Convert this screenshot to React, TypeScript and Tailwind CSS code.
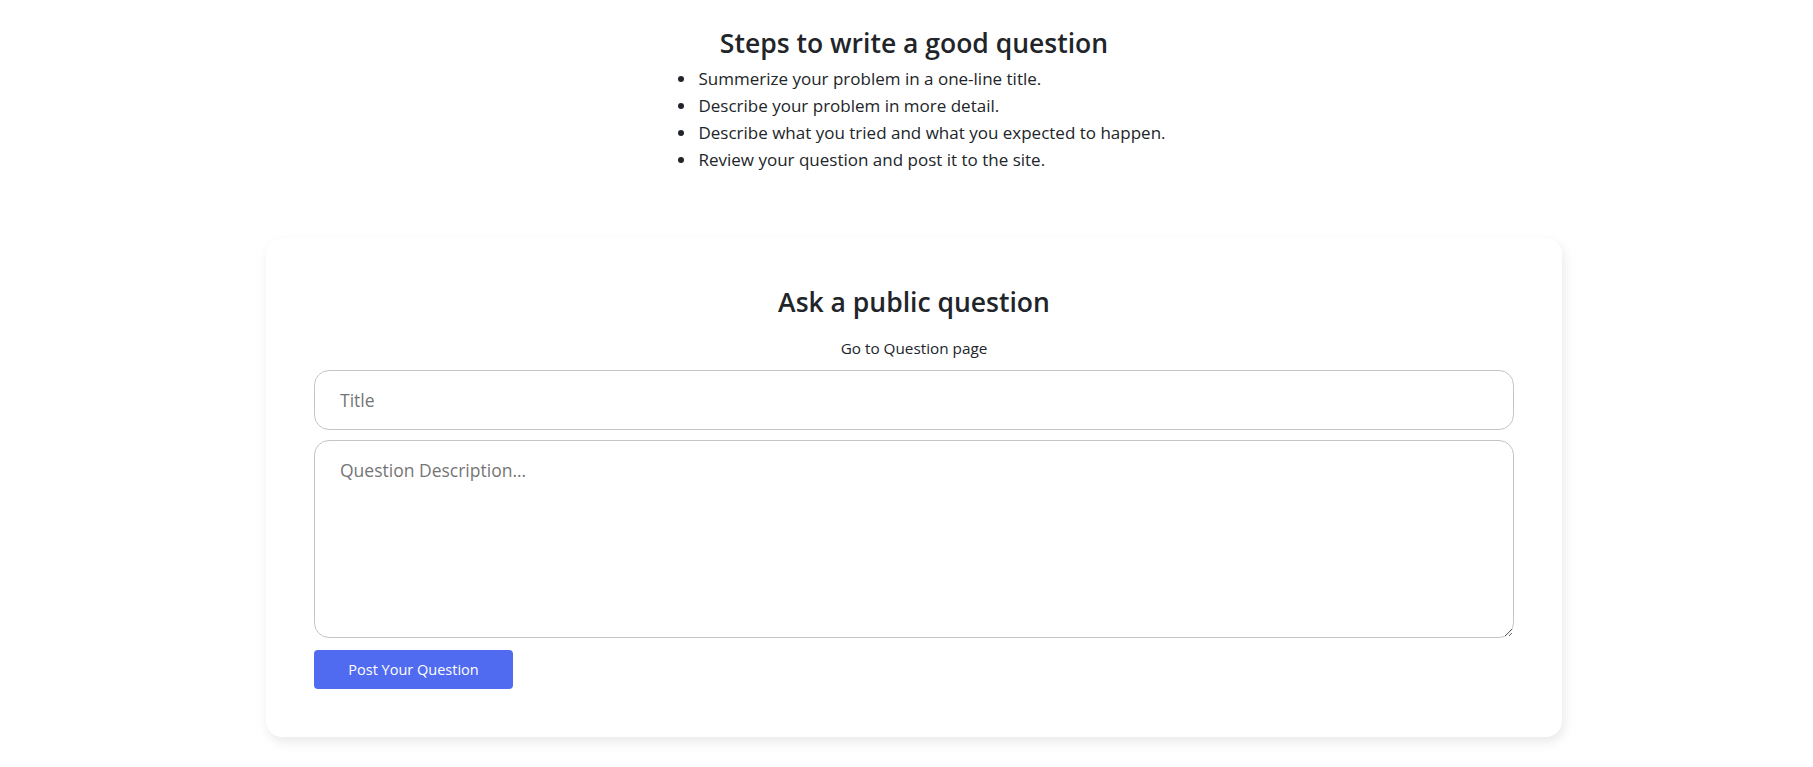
import React from 'react';

const steps = [
  'Summerize your problem in a one-line title.',
  'Describe your problem in more detail.',
  'Describe what you tried and what you expected to happen.',
  'Review your question and post it to the site.',
];

export default function App() {
  return (
    <div className="min-h-screen bg-white pl-[15px] font-['Open_Sans',sans-serif] text-[#212529]">
      <div className="flex flex-col items-center pt-[27px]">
        <h3 className="text-[26.5px] leading-[32px] font-semibold">Steps to write a good question</h3>
        <ul className="list-disc pl-[35px] mt-[6px] text-[17px] leading-[27px]">
          {steps.map((s) => (
            <li key={s} className="pl-[1px]">{s}</li>
          ))}
        </ul>

        <div className="mt-[65px] w-[1296px] rounded-2xl bg-white p-12 shadow-[2px_5px_12px_rgba(0,0,0,0.09)] flex flex-col">
          <h4 className="text-center text-[26.5px] leading-[33px] font-semibold">Ask a public question</h4>
          <a href="#" className="self-center mt-[18px] text-[15.3px] leading-[23px] text-[#212529]">Go to Question page</a>
          <form className="flex flex-col mt-[10px]">
            <input
              type="text"
              placeholder="Title"
              className="h-[60px] w-full rounded-[15px] border border-[#c4c4c4] px-[25px] text-[17.5px] placeholder-[#757575] outline-none"
            />
            <textarea
              placeholder="Question Description..."
              className="mt-[10px] h-[198px] w-full rounded-[15px] border border-[#c4c4c4] px-[25px] pt-[16px] text-[17.5px] placeholder-[#757575] outline-none"
            />
            <button
              type="button"
              className="mt-[12px] h-[39px] w-[199px] rounded bg-[#516bf0] text-white text-[14.5px]"
            >
              Post Your Question
            </button>
          </form>
        </div>
      </div>
    </div>
  );
}
